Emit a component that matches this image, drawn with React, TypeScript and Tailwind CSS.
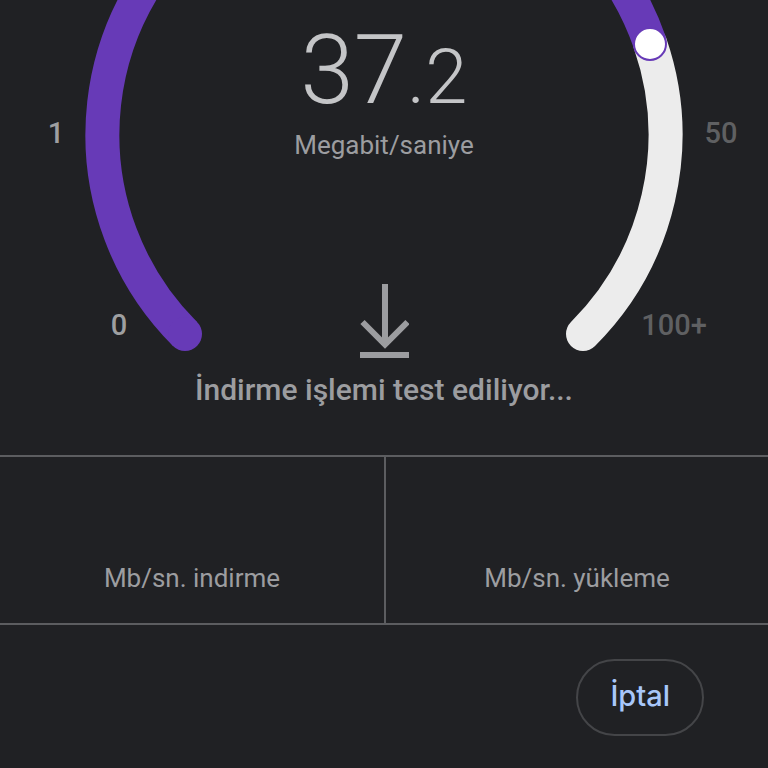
const ticks = [
  { label: '0', x: 119, y: 335, reached: true },
  { label: '1', x: 56, y: 143, reached: true },
  { label: '50', x: 721, y: 143, reached: false },
  { label: '100+', x: 674, y: 335, reached: false },
];

const results = ['Mb/sn. indirme', 'Mb/sn. yükleme'];

function Gauge() {
  return (
    <svg
      className="absolute top-0 left-1/2 -translate-x-1/2"
      width="768"
      height="360"
      viewBox="0 0 768 360"
      fill="none"
      aria-hidden="true"
    >
      {/* remaining part of the scale */}
      <path
        d="M650 43 A281.5 281.5 0 0 1 583 334"
        stroke="#ececec"
        strokeWidth="34"
        strokeLinecap="round"
      />
      {/* measured part, runs over the top of the dial */}
      <path
        d="M185 334 A281.5 281.5 0 1 1 650 43"
        stroke="#673ab7"
        strokeWidth="34"
      />
      <circle cx="185" cy="334" r="17" fill="#673ab7" />
      <circle cx="650" cy="44" r="16" fill="#fff" stroke="#673ab7" strokeWidth="2" />
      {ticks.map((tick) => (
        <text
          key={tick.label}
          x={tick.x}
          y={tick.y}
          textAnchor="middle"
          className={`text-[29px] font-medium ${tick.reached ? 'fill-[#9e9fa1]' : 'fill-[#5f6062]'}`}
        >
          {tick.label}
        </text>
      ))}
    </svg>
  );
}

function DownloadIcon() {
  return (
    <svg
      width="50"
      height="74"
      viewBox="0 0 50 74"
      fill="none"
      stroke="#9c9da0"
      strokeWidth="6"
      aria-hidden="true"
    >
      <path d="M26 0v60" />
      <path d="M3.5 38 26 60.5 48.5 38" />
      <path d="M1 71h49" />
    </svg>
  );
}

export default function App() {
  return (
    <main className="flex min-h-screen flex-col bg-[#202124] font-['Roboto',sans-serif] text-[#9c9da0]">
      <section className="relative flex flex-col items-center overflow-hidden pb-[45px]">
        <Gauge />
        <p className="mt-[22px] text-[96px] leading-24 font-light text-[#c4c5c7]">
          37<span className="text-[76px]">.2</span>
        </p>
        <p className="text-[26px] leading-10">Megabit/saniye</p>
        <div className="mt-[119px]">
          <DownloadIcon />
        </div>
        <p className="mt-3 text-[30px] leading-10 font-medium">İndirme işlemi test ediliyor...</p>
      </section>

      <section className="grid grid-cols-2 border-y-2 border-[#5c5d60]">
        {results.map((label) => (
          <div
            key={label}
            className="flex h-[166px] items-end justify-center border-[#5c5d60] pb-[25px] last:border-l-2"
          >
            <p className="text-[26px] leading-10">{label}</p>
          </div>
        ))}
      </section>

      <footer className="flex justify-end px-16 py-[34px]">
        <button
          type="button"
          className="h-[77px] rounded-full border-2 border-[#444548] px-8 pb-1 font-['Inter',sans-serif] text-[29px] font-medium text-[#a8c7fa]"
        >
          İptal
        </button>
      </footer>
    </main>
  );
}
